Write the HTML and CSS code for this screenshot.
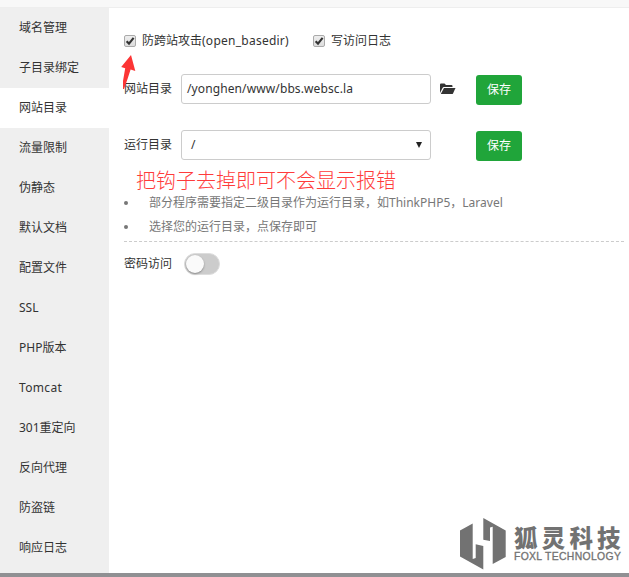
FILE: index.html
```html
<!DOCTYPE html>
<html lang="zh-CN">
<head>
<meta charset="utf-8">
<title>网站目录</title>
<link rel="stylesheet" href="styles.css">
</head>
<body>
<div class="topbar"></div>
<div class="dialog">
  <nav class="menu">
    <a>域名管理</a>
    <a>子目录绑定</a>
    <a class="active">网站目录</a>
    <a>流量限制</a>
    <a>伪静态</a>
    <a>默认文档</a>
    <a>配置文件</a>
    <a>SSL</a>
    <a>PHP版本</a>
    <a class="wide">Tomcat</a>
    <a>301重定向</a>
    <a>反向代理</a>
    <a>防盗链</a>
    <a>响应日志</a>
  </nav>
  <main class="content">
    <div class="checks">
      <label class="check first"><span class="box"><svg viewBox="0 0 10 10"><path d="M1.6 5.2 4 7.6 8.6 1.8"/></svg></span>防跨站攻击<span class="func">(open_basedir)</span></label>
      <label class="check"><span class="box"><svg viewBox="0 0 10 10"><path d="M1.6 5.2 4 7.6 8.6 1.8"/></svg></span>写访问日志</label>
    </div>
    <div class="row">
      <span class="label">网站目录</span>
      <div class="field"><span class="path">/yonghen/www/bbs.websc.la</span></div>
      <svg class="folder" viewBox="0 0 16 12"><path d="M0 10V1.5Q0 .5 1 .5H4.5L6 2H11.5Q12.5 2 12.5 3V4H4Q3 4 2.5 5Z"/><path d="M4 5H15.5L13 10.5Q12.7 11 12 11H.8Z"/></svg>
      <button class="save">保存</button>
    </div>
    <div class="row second">
      <span class="label">运行目录</span>
      <div class="field select"><span>/</span><i class="caret"></i></div>
      <button class="save">保存</button>
    </div>
    <p class="note">把钩子去掉即可不会显示报错</p>
    <ul class="tips">
      <li>部分程序需要指定二级目录作为运行目录，如<span>ThinkPHP5</span>，<span>Laravel</span></li>
      <li>选择您的运行目录，点保存即可</li>
    </ul>
    <div class="access"><span class="label">密码访问</span><span class="switch"></span></div>
  </main>
</div>
<div class="bottombar"></div>
<svg class="arrow" viewBox="0 0 16 36"><path d="M11 1 15.3 17 10.6 15.5Q8 24 4 35H3V27L5.2 14.3 1.2 13Z"/></svg>
<div class="brand">
  <svg class="mark" viewBox="0 0 48 54"><path d="M1 13.5 13.7 6.5V42L16.7 41V27.3L24.3 29V52.5L1 39.5Z"/><path d="M24.3 1 46.7 13.5V40L33.7 47V9.7L31 10.5V24L24.3 22.7Z"/></svg>
  <div class="words"><div class="cn">狐灵科技</div><div class="en">FOXL TECHNOLOGY</div></div>
</div>
</body>
</html>
```
FILE: styles.css
```css
* { box-sizing: border-box; }
body {
  margin: 0;
  width: 629px;
  height: 577px;
  overflow: hidden;
  position: relative;
  background: #fff;
  color: #333;
  font: 12px/20px "Noto Sans", "Noto Sans CJK SC", sans-serif;
}
.topbar { height: 8px; background: #f8f8f8; border-bottom: 1px solid #eee; }
.dialog { display: flex; height: 565px; }
.menu { width: 109px; background: #efefef; }
.menu a { display: block; height: 40px; padding-left: 19px; line-height: 39px; white-space: nowrap; }
.menu .active { background: #fff; }
.menu .wide { letter-spacing: .35px; }
.content { flex: 1; padding: 22px 4px 0 15px; }
.checks { display: flex; height: 22px; }
.check { display: flex; align-items: center; white-space: nowrap; }
.first { width: 189px; }
.box {
  width: 12px;
  height: 12px;
  margin-right: 6px;
  border: 1px solid #aaa;
  border-radius: 2px;
  background: linear-gradient(#eee, #ddd);
}
.box svg { display: block; width: 10px; height: 10px; fill: none; stroke: #333; stroke-width: 2.1; }
.func { letter-spacing: .25px; }
.row { display: flex; align-items: center; height: 30px; margin-top: 22px; }
.second { margin-top: 26px; }
.label { width: 57px; line-height: 28px; }
.field {
  display: flex;
  align-items: center;
  width: 250px;
  height: 30px;
  padding: 0 5px;
  border: 1px solid #ccc;
  border-radius: 3px;
}
.path { letter-spacing: .11px; }
.select { justify-content: space-between; padding: 0 8px 0 9px; }
.caret { border: 3px solid transparent; border-top: 6px solid #222; border-bottom: 0; }
.folder { width: 16px; height: 12px; margin-left: 9px; fill: #333; }
.save {
  width: 46px;
  height: 30px;
  margin: 2px 0 0 45px;
  padding: 0;
  border: 0;
  border-radius: 3px;
  background: #20a53a;
  color: #fff;
  font: inherit;
}
.folder + .save { margin-left: 20px; }
.note {
  margin: 8px 0 -1px 12px;
  color: #ff3b3b;
  font: 300 20px/24px "Noto Sans CJK SC", serif;
}
.tips {
  margin: 0;
  padding: 0 0 2px;
  width: 500px;
  list-style: none;
  color: #777;
  line-height: 24px;
  border-bottom: 1px dashed #ccc;
}
.tips li { display: flex; align-items: center; height: 24px; white-space: nowrap; }
.tips li::before { content: ""; width: 4px; height: 4px; margin-right: 21px; border-radius: 50%; background: #777; }
.access { display: flex; align-items: center; height: 44px; }
.access .label { width: 60px; }
.switch { width: 36px; height: 22px; border-radius: 11px; background: #ccc; border: 1px solid #ddd; padding: 1px; }
.switch::before { content: ""; display: block; width: 18px; height: 18px; border-radius: 50%; background: #fafafa; box-shadow: 0 1px 2px #888; }
.bottombar { height: 4px; background: #909093; }
.arrow { position: absolute; left: 120px; top: 54px; width: 16px; height: 36px; fill: #fc3535; }
.brand { position: absolute; left: 459px; top: 517px; display: flex; color: #727272; }
.mark { width: 48px; height: 54px; fill: #727272; }
.words { padding: 8px 0 0 7px; white-space: nowrap; }
.cn { font: 900 23.5px/25px "Noto Sans CJK SC", sans-serif; letter-spacing: 4.2px; }
.en { font: 10.4px/13px "Liberation Sans", sans-serif; letter-spacing: .33px; -webkit-text-stroke: .3px #727272; }
```
